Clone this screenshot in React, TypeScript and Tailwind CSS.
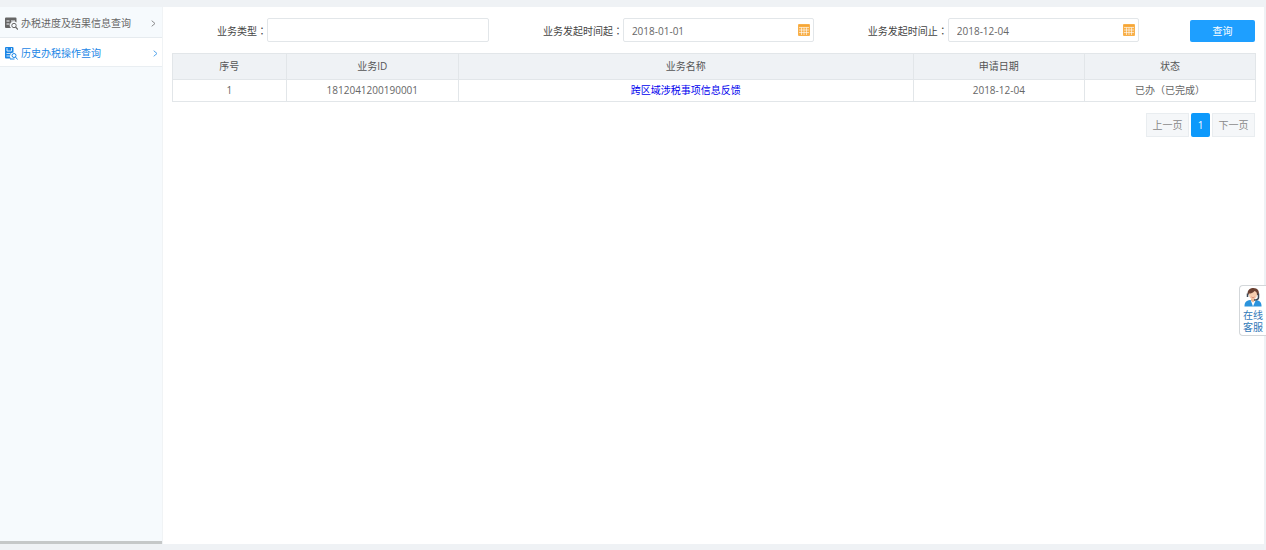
import { useState } from 'react';
import type { ReactNode } from 'react';

function ListSearchIcon() {
  return (
    <svg width="13" height="13" viewBox="0 0 26 26" fill="none" aria-hidden="true" className="shrink-0">
      <path d="M2 1h19a2 2 0 0 1 2 2v8a7 7 0 0 0-11 11H2a2 2 0 0 1-2-2V3a2 2 0 0 1 2-2z" fill="currentColor" />
      <path d="M3 8h6M12 8h8M3 14h6" stroke="#f7fafd" strokeWidth="2" />
      <circle cx="18" cy="17" r="4.4" stroke="currentColor" strokeWidth="2" />
      <path d="M21 20l5 5" stroke="currentColor" strokeWidth="2.4" />
    </svg>
  );
}

function HistoryIcon() {
  return (
    <svg width="13" height="13" viewBox="0 0 26 26" fill="none" aria-hidden="true" className="shrink-0">
      <path d="M2 0h13a2 2 0 0 1 2 2v9a7 7 0 0 0-5 12H2a2 2 0 0 1-2-2V2a2 2 0 0 1 2-2z" fill="currentColor" />
      <path d="M4 2v6h9V2M3 13h8M3 18h7" stroke="#fff" strokeWidth="1.6" />
      <circle cx="18" cy="17" r="4" stroke="currentColor" strokeWidth="2" />
      <path d="M21 20l4 5M10 24h9" stroke="currentColor" strokeWidth="2" />
    </svg>
  );
}

function CalendarIcon() {
  return (
    <svg width="12" height="12" viewBox="0 0 12 12" aria-hidden="true">
      <rect width="12" height="12" rx="1" fill="#f8b04a" />
      <path d="M1 3.5h10M1 6h10M1 8.5h10" stroke="#fff" strokeWidth="0.6" />
      <path d="M3.5 3.5v7.5M6 3.5v7.5M8.5 3.5v7.5" stroke="#fff" strokeWidth="0.6" />
      <path d="M1 1.8h10" stroke="#f5a32f" strokeWidth="1" />
    </svg>
  );
}

function AgentIcon() {
  return (
    <svg width="18" height="19" viewBox="0 0 36 38" aria-hidden="true">
      <path d="M1 37c0-8 3-12 11-13h12c8 1 11 5 11 13z" fill="#2b93dc" />
      <path d="M13 23l5 14 6-14z" fill="#fff" />
      <path d="M14 19h8v6l-4 4-4-4z" fill="#eab590" />
      <ellipse cx="18" cy="13" rx="8" ry="10" fill="#f6cdae" />
      <path d="M8 15C5 5 11 0 19 0s13 6 10 15l-3-1c0-5-2-7-5-8-3 4-7 5-11 5z" fill="#6b4132" />
      <path d="M7 11v7M29 11v8c0 4-4 5-9 5" stroke="#3c4854" strokeWidth="3" fill="none" />
      <path d="M15 18c2 2 4 2 6 0" stroke="#c55b4e" strokeWidth="1.4" fill="none" />
    </svg>
  );
}

function Chevron() {
  return (
    <svg width="5" height="7" viewBox="0 0 5 7" fill="none" aria-hidden="true" className="ml-auto opacity-75">
      <path d="M0.7 0.7L4 3.5L0.7 6.3" stroke="currentColor" />
    </svg>
  );
}

function FieldLabel({ id, wide, children }: { id: string; wide?: boolean; children: ReactNode }) {
  return (
    <label
      htmlFor={id}
      className={`${wide ? 'w-[126px]' : 'w-[95px]'} shrink-0 pt-0.5 text-right whitespace-nowrap text-[#444]`}
    >
      {children}
      <span className="font-['Noto_Sans_CJK_TC',sans-serif]">：</span>
    </label>
  );
}

function DateField({ id, label, initial }: { id: string; label: string; initial: string }) {
  const [value, setValue] = useState(initial);
  return (
    <div className="flex items-center pr-2">
      <FieldLabel id={id} wide>
        {label}
      </FieldLabel>
      <div className="flex h-6 min-w-0 flex-1 items-center rounded-xs border border-[#e2e6e9] pr-[3px]">
        <input
          id={id}
          value={value}
          onChange={(e) => setValue(e.target.value)}
          className="h-full min-w-0 flex-1 bg-transparent px-2 pt-0.5 text-[#666] outline-none"
        />
        <button type="button" aria-label="选择日期">
          <CalendarIcon />
        </button>
      </div>
    </div>
  );
}

const columns = ['序号', '业务ID', '业务名称', '申请日期', '状态'];
const rows = [
  { id: '1812041200190001', name: '跨区域涉税事项信息反馈', date: '2018-12-04', status: '已办（已完成）' },
];

export default function App() {
  const [type, setType] = useState('');
  return (
    <div className="flex min-h-screen flex-col bg-[#eff2f5] pt-[7px] pb-[6px] font-['Open_Sans','Noto_Sans_CJK_SC',sans-serif] text-[10px] leading-4">
      <div className="flex flex-1">
        <aside className="flex w-[162px] shrink-0 flex-col bg-[#f6fafd]">
          <nav>
            <a
              href="#progress"
              className="flex h-[31px] items-center gap-[3px] border-b border-[#e6ebef] pt-0.5 pr-1.5 pl-[5px] text-[#666]"
            >
              <ListSearchIcon />
              办税进度及结果信息查询
              <Chevron />
            </a>
            <a
              href="#history"
              aria-current="page"
              className="flex h-[29px] items-center gap-[3px] border-b border-[#e9eef2] bg-white pt-0.5 pr-1 pl-[5px] text-[#1b86e6]"
            >
              <HistoryIcon />
              历史办税操作查询
              <Chevron />
            </a>
          </nav>
          <div className="mt-auto h-[3px] bg-[#c5c8c8]" />
        </aside>

        <main className="mr-0.5 min-w-0 flex-1 border-l border-[#f0f3f5] bg-white pt-[11px] pr-2 pl-[9px]">
          <form className="grid grid-cols-[30%_30%_30%_10%] pr-px" onSubmit={(e) => e.preventDefault()}>
            <div className="flex items-center pr-2">
              <FieldLabel id="type">业务类型</FieldLabel>
              <input
                id="type"
                value={type}
                onChange={(e) => setType(e.target.value)}
                className="h-6 min-w-0 flex-1 rounded-xs border border-[#e2e6e9] px-2 text-[#666] outline-none"
              />
            </div>
            <DateField id="from" label="业务发起时间起" initial="2018-01-01" />
            <DateField id="to" label="业务发起时间止" initial="2018-12-04" />
            <button
              type="submit"
              className="mt-0.5 h-[22px] w-[65px] justify-self-end rounded-xs bg-[#1e9fff] text-white"
            >
              查询
            </button>
          </form>

          <table className="mt-[11px] w-full table-fixed border-collapse text-center">
            <colgroup>
              <col className="w-[10.5%]" />
              <col className="w-[15.9%]" />
              <col className="w-[42%]" />
              <col className="w-[15.8%]" />
              <col className="w-[15.8%]" />
            </colgroup>
            <thead>
              <tr className="h-[26px] bg-[#eff2f5] text-[#555]">
                {columns.map((name) => (
                  <th key={name} scope="col" className="border border-[#e2e6e9] pb-0.5 font-normal">
                    {name}
                  </th>
                ))}
              </tr>
            </thead>
            <tbody className="[&_td]:border [&_td]:border-[#e2e6e9] [&_td]:pb-0.5">
              {rows.map((row, i) => (
                <tr key={row.id} className="h-[22px] text-[#666]">
                  <td>{i + 1}</td>
                  <td>{row.id}</td>
                  <td>
                    <a href="#detail" className="text-[#0000ee]">
                      {row.name}
                    </a>
                  </td>
                  <td>{row.date}</td>
                  <td>{row.status}</td>
                </tr>
              ))}
            </tbody>
          </table>

          <nav aria-label="分页" className="mt-[11px] flex justify-end gap-0.5 pr-px">
            <button type="button" className="h-6 w-[43px] border border-[#e9edf0] bg-[#f5f7f9] text-[#888]">
              上一页
            </button>
            <button type="button" aria-current="page" className="h-6 w-[19px] rounded-xs bg-[#0d99fb] text-white">
              1
            </button>
            <button type="button" className="h-6 w-[43px] border border-[#e9edf0] bg-[#f5f7f9] text-[#888]">
              下一页
            </button>
          </nav>
        </main>
      </div>

      <button
        type="button"
        className="fixed top-[285px] right-0 flex h-[51px] w-[27px] flex-col items-center rounded-l border border-r-0 border-[#d3d7da] bg-white pt-0.5 leading-3 text-[#2f78b8]"
      >
        <AgentIcon />
        <span className="mt-0.5">在线</span>
        <span>客服</span>
      </button>
    </div>
  );
}
